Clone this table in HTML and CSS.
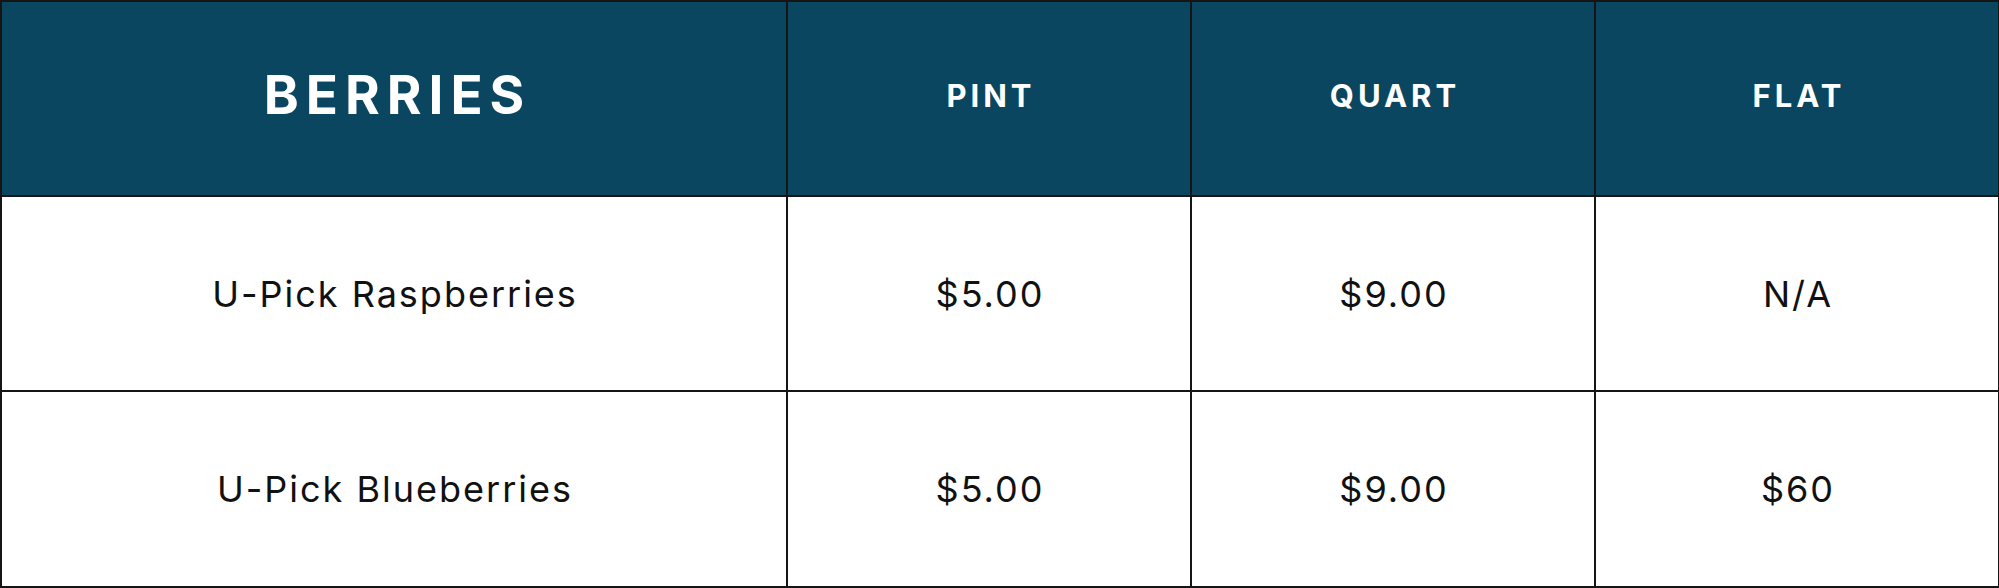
FILE: index.html
```html
<!DOCTYPE html>
<html lang="en">
<head>
<meta charset="utf-8">
<title>Berries Pricing</title>
<link rel="stylesheet" href="styles.css">
</head>
<body>
<table class="prices">
  <colgroup>
    <col class="col-name">
    <col class="col-price">
    <col class="col-price">
    <col class="col-price">
  </colgroup>
  <thead>
    <tr class="head-row">
      <th class="title">BERRIES</th>
      <th class="unit">PINT</th>
      <th class="unit">QUART</th>
      <th class="unit">FLAT</th>
    </tr>
  </thead>
  <tbody>
    <tr class="row row-1">
      <td>U-Pick Raspberries</td>
      <td>$5.00</td>
      <td>$9.00</td>
      <td>N/A</td>
    </tr>
    <tr class="row row-2">
      <td>U-Pick Blueberries</td>
      <td>$5.00</td>
      <td>$9.00</td>
      <td>$60</td>
    </tr>
  </tbody>
</table>
</body>
</html>
```

FILE: styles.css
```css
html, body {
  margin: 0;
  padding: 0;
  background: #ffffff;
}

.prices {
  width: 1999px;
  border-collapse: collapse;
  table-layout: fixed;
  font-family: Inter, "Open Sans", "Liberation Sans", sans-serif;
  color: #111111;
}

.col-name { width: 786px; }
.col-price { width: 404px; }

.prices th,
.prices td {
  border: 2px solid #151515;
  text-align: center;
  vertical-align: middle;
  padding: 0;
}

.head-row {
  height: 195px;
  background: #0a465f;
}

.head-row th {
  color: #ffffff;
  font-weight: 700;
  padding-bottom: 7px;
}

.title {
  font-size: 53px;
  letter-spacing: 7px;
  text-indent: 7px;
}

.unit {
  font-size: 31px;
  letter-spacing: 4px;
  text-indent: 4px;
}

.row-1 { height: 195px; }
.row-2 { height: 196px; }

.row td {
  font-size: 36px;
  font-weight: 400;
  letter-spacing: 2px;
  text-indent: 2px;
}
```
